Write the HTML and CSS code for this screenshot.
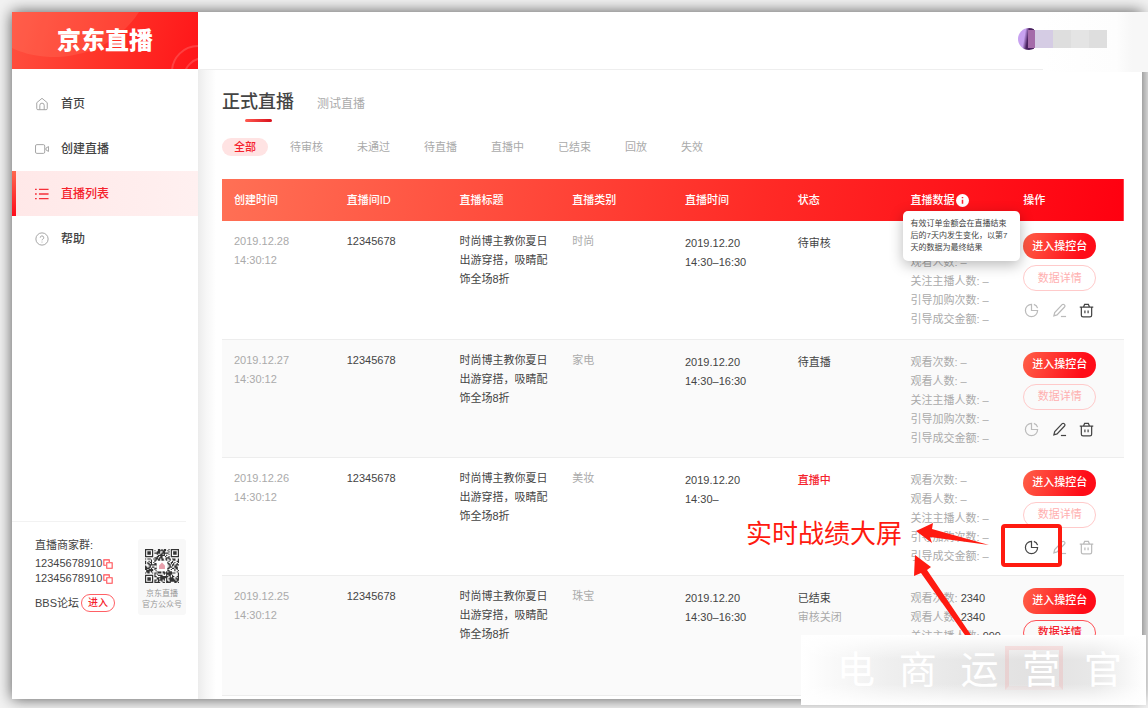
FILE: index.html
```html
<!DOCTYPE html>
<html lang="zh-CN">
<head>
<meta charset="utf-8">
<title>京东直播</title>
<link rel="stylesheet" href="styles.css">
</head>
<body>
<svg class="symbols" aria-hidden="true">
  <symbol id="pie" viewBox="0 0 16 16"><path d="M8 1.500A6.500 6.500 0 1 0 14.500 8H8z"/><path d="M10.500 1.500A6 6 0 0 1 14.500 5.500"/></symbol>
  <symbol id="edit" viewBox="0 0 16 16"><path d="M2 13.800l.9-3.600 8-8.400a1.400 1.400 0 0 1 2 0l.5.500a1.400 1.400 0 0 1 0 2L5.400 12.700z"/><path d="M9.500 14.400h5.500"/></symbol>
  <symbol id="trash" viewBox="0 0 16 16"><path d="M.8 4.400h14.400M4.800 4.200L6 1.500h4l1.200 2.700M2.500 4.600v8.400a1.800 1.800 0 0 0 1.800 1.800h7.400a1.800 1.800 0 0 0 1.800-1.800V4.600M6.300 8v3M9.700 8v3"/></symbol>
  <symbol id="copy" viewBox="0 0 12 12"><path d="M3.500 7.500H1V1h6.500v2.500M4.500 4.500H11V11H4.500z"/></symbol>
</svg>
<div class="window">
  <aside class="sidebar">
    <div class="logo">
      <svg class="logo-art" viewBox="0 0 186 57" preserveAspectRatio="none" aria-hidden="true">
        <path class="swoosh" d="M0 0H127C105 34 68 46 38 45C20 44 8 40 0 36Z"/>
        <circle class="ring" cx="186" cy="60" r="26"/><circle class="ring" cx="192" cy="66" r="20"/>
      </svg>
      <span class="logo-text">京东直播</span>
    </div>
    <nav class="nav">
      <a class="nav-item" href="#"><svg class="nav-icon" viewBox="0 0 16 16"><path d="M2 6.500L8 1.500l6 5v6.700a1.300 1.300 0 0 1-1.300 1.300H3.300A1.300 1.300 0 0 1 2 13.200zM5.500 14.300V9.500a2.500 2.500 0 0 1 5 0v4.800"/></svg>首页</a>
      <a class="nav-item" href="#"><svg class="nav-icon" viewBox="0 0 16 16"><rect x="0.600" y="3" width="10.500" height="10" rx="1.500"/><path d="M12.500 7l2.900-1.800v5.600L12.500 9z"/></svg>创建直播</a>
      <a class="nav-item active" href="#"><svg class="nav-icon" viewBox="0 0 16 16"><path d="M4.500 2.800h11M4.500 8h11M4.500 13.200h11M0 2.800h2M0 8h2M0 13.200h2"/></svg>直播列表</a>
      <a class="nav-item" href="#"><svg class="nav-icon" viewBox="0 0 16 16"><circle cx="8" cy="8" r="7"/><path d="M6 6.500a2 2 0 1 1 2.800 1.800c-.6.3-.8.600-.8 1.200M8 11v1"/></svg>帮助</a>
    </nav>
    <div class="side-foot">
      <div class="contact">
        <div class="contact-title">直播商家群:</div>
        <div class="contact-row">12345678910<button class="copy" aria-label="复制"><svg><use href="#copy"/></svg></button></div>
        <div class="contact-row">12345678910<button class="copy" aria-label="复制"><svg><use href="#copy"/></svg></button></div>
        <div class="contact-row forum">BBS论坛<button class="enter">进入</button></div>
      </div>
      <div class="qr-card">
        <svg class="qr" viewBox="0 0 29 29" aria-label="二维码"><path id="qr-path"/><rect class="qr-hole" x="10" y="10" width="9" height="9"/><path class="qr-logo" d="M12 17v-3l2.500-2.500L17 14v3z"/></svg>
        <span>京东直播<br>官方公众号</span>
      </div>
    </div>
  </aside>
  <div class="body">
    <header class="topbar">
      <div class="user"><span class="avatar"></span><span class="mosaic"><i></i><i></i><i></i><i></i><i></i></span></div>
    </header>
    <main class="main">
      <div class="titles"><h1>正式直播</h1><a class="subtitle" href="#">测试直播</a></div>
      <div class="tabs">
        <button class="tab selected">全部</button><button class="tab">待审核</button><button class="tab">未通过</button><button class="tab">待直播</button><button class="tab">直播中</button><button class="tab">已结束</button><button class="tab">回放</button><button class="tab">失效</button>
      </div>
      <table class="list">
        <thead><tr>
          <th>创建时间</th><th>直播间ID</th><th>直播标题</th><th>直播类别</th><th>直播时间</th><th>状态</th>
          <th class="tip-cell"><span class="tip-label">直播数据<svg class="info" viewBox="0 0 12 12"><circle cx="6" cy="6" r="6"/><path d="M6 5.200V9M6 2.800v1.200"/></svg></span><div class="tooltip">有效订单金额会在直播结束<br>后的7天内发生变化，以第7<br>天的数据为最终结果</div></th>
          <th>操作</th>
        </tr></thead>
        <tbody>
          <tr>
            <td class="muted">2019.12.28<br>14:30:12</td><td>12345678</td><td>时尚博主教你夏日出游穿搭，吸睛配饰全场8折</td><td class="muted">时尚</td>
            <td class="low">2019.12.20<br>14:30–16:30</td><td class="low">待审核</td>
            <td class="low stats"><br>观看人数: –<br>关注主播人数: –<br>引导加购次数: –<br>引导成交金额: –</td>
            <td class="ops"><button class="primary">进入操控台</button><button class="outline" disabled>数据详情</button><div class="icons"><button disabled aria-label="数据"><svg><use href="#pie"/></svg></button><button disabled aria-label="编辑"><svg><use href="#edit"/></svg></button><button aria-label="删除"><svg><use href="#trash"/></svg></button></div></td>
          </tr>
          <tr>
            <td class="muted">2019.12.27<br>14:30:12</td><td>12345678</td><td>时尚博主教你夏日出游穿搭，吸睛配饰全场8折</td><td class="muted">家电</td>
            <td class="low">2019.12.20<br>14:30–16:30</td><td class="low">待直播</td>
            <td class="low stats">观看次数: –<br>观看人数: –<br>关注主播人数: –<br>引导加购次数: –<br>引导成交金额: –</td>
            <td class="ops"><button class="primary">进入操控台</button><button class="outline" disabled>数据详情</button><div class="icons"><button disabled aria-label="数据"><svg><use href="#pie"/></svg></button><button aria-label="编辑"><svg><use href="#edit"/></svg></button><button aria-label="删除"><svg><use href="#trash"/></svg></button></div></td>
          </tr>
          <tr>
            <td class="muted">2019.12.26<br>14:30:12</td><td>12345678</td><td>时尚博主教你夏日出游穿搭，吸睛配饰全场8折</td><td class="muted">美妆</td>
            <td class="low">2019.12.20<br>14:30–</td><td class="low live">直播中</td>
            <td class="low stats">观看次数: –<br>观看人数: –<br>关注主播人数: –<br>引导加购次数: –<br>引导成交金额: –</td>
            <td class="ops"><button class="primary">进入操控台</button><button class="outline" disabled>数据详情</button><div class="icons"><button aria-label="数据"><svg><use href="#pie"/></svg></button><button disabled aria-label="编辑"><svg><use href="#edit"/></svg></button><button disabled aria-label="删除"><svg><use href="#trash"/></svg></button></div></td>
          </tr>
          <tr>
            <td class="muted">2019.12.25<br>14:30:12</td><td>12345678</td><td>时尚博主教你夏日出游穿搭，吸睛配饰全场8折</td><td class="muted">珠宝</td>
            <td class="low">2019.12.20<br>14:30–16:30</td><td class="low">已结束<br><span class="muted">审核关闭</span></td>
            <td class="low stats">观看次数: <b>2340</b><br>观看人数: <b>2340</b><br>关注主播人数: <b>999</b></td>
            <td class="ops"><button class="primary">进入操控台</button><button class="outline">数据详情</button></td>
          </tr>
        </tbody>
      </table>
    </main>
  </div>
  <div class="note">实时战绩大屏</div>
  <svg class="arrows" viewBox="0 0 80 120" aria-hidden="true"><path d="M4 11L21 3L20 9L77 25L18 17L20 23ZM3 35L19 47L15 50L61 118L55 118L9 53L2 56Z"/></svg>
  <div class="mark"></div>
  <div class="patch"></div>
  <div class="watermark"><i class="faint-mark"></i><span>电</span><span>商</span><span>运</span><span>营</span><span>官</span></div>
</div>
<script src="qr.js"></script>
</body>
</html>
```
FILE: styles.css
```css
* { box-sizing: border-box; }
body {
  margin: 0;
  padding: 12px 6px 9px 12px;
  background: #f2f2f2;
  color: #444;
  font: 11px/19px "Liberation Sans", "Noto Sans CJK SC", sans-serif;
}
button { margin: 0; padding: 0; border: 0; background: none; font: inherit; color: inherit; }
a { color: inherit; text-decoration: none; }
svg { fill: none; stroke: currentColor; display: block; }
.symbols { display: none; }

.window {
  position: relative;
  display: flex;
  min-height: calc(100vh - 21px);
  background: #fff;
  box-shadow: 0 0 14px rgba(0, 0, 0, .65);
}

/* sidebar */
.sidebar { flex: none; width: 186px; display: flex; flex-direction: column; }
.logo {
  position: relative;
  height: 57px;
  display: flex;
  align-items: center;
  justify-content: center;
  background: linear-gradient(105deg, #ff5140, #ff3328 50%, #ff1519);
}
.logo-art { position: absolute; inset: 0; width: 100%; height: 100%; stroke: none; }
.swoosh { fill: rgba(255, 150, 120, .2); }
.ring { stroke: rgba(255, 150, 150, .3); stroke-width: 2; }
.logo-text { position: relative; color: #fff; font-size: 24px; line-height: 32px; font-weight: 900; }
.nav { padding-top: 12px; }
.nav-item {
  display: flex;
  align-items: center;
  gap: 12px;
  height: 45px;
  padding: 1px 0 0 19px;
  border-left: 4px solid transparent;
  font-size: 12px;
  font-weight: 500;
}
.nav-icon { width: 14px; height: 14px; color: #999; }
.nav-item.active {
  color: #f5222d;
  background: linear-gradient(90deg, #ffe8e8, #fff0f0);
  border-image: linear-gradient(#ff6a50, #ff0a1a) 1;
}
.nav-item.active .nav-icon { color: #f5303a; stroke-width: 1.5; }
.side-foot {
  display: flex;
  justify-content: space-between;
  align-items: flex-start;
  margin: auto 12px 0 0;
  padding: 17px 0 84px 23px;
  border-top: 1px solid #f2f2f2;
}
.contact-title { line-height: 12px; margin-bottom: 5px; }
.contact-row { display: flex; align-items: center; gap: 1px; line-height: 15px; }
.forum { margin-top: 8px; line-height: 18px; gap: 2px; }
.copy { color: #ff4a50; }
.copy svg { width: 10px; height: 10px; stroke-width: 1.300; }
.enter {
  width: 34px;
  height: 18px;
  line-height: 16px;
  border: 1px solid #ff6065;
  border-radius: 9px;
  color: #f5222d;
  font-size: 10px;
  font-weight: 500;
}
.qr-card {
  display: flex;
  flex-direction: column;
  align-items: center;
  gap: 5px;
  width: 48px;
  padding: 10px 0 5px;
  border-radius: 3px;
  background: #f8f8f8;
  color: #999;
  font-size: 8px;
  line-height: 11px;
  text-align: center;
}
.qr { width: 34px; height: 34px; stroke: none; fill: #333; }
.qr-hole { fill: #fff; }
.qr-logo { fill: #e8a0ac; }

/* content */
.body { flex: 1; min-width: 0; display: flex; flex-direction: column; }
.topbar {
  display: flex;
  align-items: center;
  justify-content: flex-end;
  height: 58px;
  padding: 0 35px 3px 0;
  border-bottom: 1px solid #eee;
}
.user { display: flex; align-items: center; position: relative; z-index: 1; }
.avatar {
  width: 22px;
  height: 22px;
  margin-right: -12px;
  border-radius: 50%;
  background: linear-gradient(100deg, #c8a2f0 30%, #4a2060 45%);
  clip-path: inset(0 6px 0 0);
}
.mosaic { position: relative; display: flex; height: 18px; }
.mosaic i { width: 18px; background: #dedede; }
.mosaic i:nth-child(1) { width: 7px; background: #a46ba9; }
.mosaic i:nth-child(2) { background: #d5cce4; }
.mosaic i:nth-child(4) { background: #e4e4e4; }
.main {
  flex: 1;
  padding: 18px 18px 2px 24px;
  background: linear-gradient(90deg, #ececec, #f6f6f6 8px, #fff 18px);
}
.titles { display: flex; align-items: center; gap: 23px; height: 28px; }
h1 { position: relative; margin: 0; font-size: 18px; line-height: 28px; font-weight: 500; }
h1::after {
  content: "";
  position: absolute;
  left: 50%;
  bottom: -6px;
  width: 27px;
  height: 3px;
  margin-left: -13px;
  border-radius: 2px;
  background: linear-gradient(90deg, #ff5a50, #d8101c);
}
.subtitle { color: #aaa; font-size: 12px; padding-top: 4px; }
.tabs { display: flex; gap: 10px; margin: 22px 0 23px; }
.tab { height: 18px; padding: 0 12px; line-height: 18px; border-radius: 9px; color: #aaa; }
.tab.selected { color: #f5222d; background: #ffe3e3; font-weight: 500; }

.list { width: 100%; table-layout: fixed; border-collapse: collapse; }
thead tr { background: linear-gradient(100deg, #ff7055, #ff2a26 60%, #ff0010); }
th { height: 42px; padding: 0 0 0 12px; color: #fff; font-weight: 500; text-align: left; }
td { padding: 11px 8px 0 12px; vertical-align: top; }
tbody tr { height: 118px; border-bottom: 1px solid #ededed; }
tbody tr:nth-child(even) { background: #fafafa; }
tbody tr:last-child { height: 120px; }
.muted { color: #aaa; }
td.low { padding-top: 13px; }
.stats { color: #aaa; white-space: nowrap; }
.stats b { color: #444; font-weight: 400; }
.live { color: #f5222d; font-weight: 500; }
.tip-cell { position: relative; }
.tip-label { display: flex; align-items: center; gap: 1px; }
.info { width: 13px; height: 13px; fill: #fff; stroke: none; }
.info path { stroke: #ff2030; stroke-width: 1.4; }
.tooltip {
  position: absolute;
  top: 32px;
  left: 4px;
  width: 117px;
  padding: 7px 8px;
  border-radius: 5px;
  background: #fff;
  box-shadow: 0 4px 14px rgba(0, 0, 0, .28);
  color: #444;
  font-size: 8px;
  line-height: 12px;
  font-weight: 400;
  white-space: nowrap;
}
td.ops { padding: 12px 0 0 12px; }
.primary, .outline { display: block; width: 73px; height: 26px; border-radius: 13px; font-weight: 500; }
.primary { color: #fff; background: linear-gradient(110deg, #ff6048, #ff0c18 80%); }
.outline { margin-top: 6px; border: 1px solid #ff5055; color: #f5222d; }
.outline:disabled { border-color: #ffcaca; color: #ffb0b0; font-weight: 400; }
.icons { display: flex; justify-content: space-between; width: 73px; padding: 12px 2px 0 1px; }
.icons svg { width: 15px; height: 15px; stroke-width: 1.3; }
.icons button:disabled { color: #bbb; }

/* annotations floating over the page */
.note { position: absolute; left: 734px; top: 504px; color: #ff1a10; font-size: 26px; line-height: 36px; white-space: nowrap; }
.arrows { position: absolute; left: 900px; top: 508px; width: 80px; height: 120px; fill: #ff1a10; stroke: none; }
.mark { position: absolute; left: 989px; top: 512px; width: 61px; height: 43px; border: 4px solid #ff1a10; border-radius: 4px; }
.patch {
  position: absolute;
  right: -6px;
  top: 0;
  width: 105px;
  height: 60px;
  background: linear-gradient(90deg, #fff, #fdfdfd 70%, #f7f7f7 85%);
}
.watermark {
  position: absolute;
  right: -4px;
  bottom: -6px;
  display: flex;
  justify-content: space-around;
  align-items: center;
  width: 345px;
  height: 70px;
  padding: 0 12px 0 24px;
  background:
    linear-gradient(#fff, transparent 35%, transparent 70%, #fff),
    linear-gradient(90deg, #fff, #efefef 25%, #e6e6e6 50%, #e2e1e1 68%, #e8e8e8 85%, #fff);
  color: #fff;
  font-size: 38px;
  line-height: 60px;
  font-weight: 400;
}
.watermark span { position: relative; }
.faint-mark {
  position: absolute;
  left: 204px;
  top: 11px;
  width: 58px;
  height: 44px;
  border: 4px solid rgba(255, 120, 120, .16);
  border-bottom-color: rgba(255, 120, 120, .05);
}
```
FILE: qr.js
```js
const size = 29;
let seed = 7;
let d = "";
const inFinder = (x, y) => (x < 8 && y < 8) || (x > 20 && y < 8) || (x < 8 && y > 20);
for (let y = 0; y < size; y++) {
  for (let x = 0; x < size; x++) {
    seed = (seed * 16807) % 2147483647;
    if (!inFinder(x, y) && seed % 100 < 52) d += `M${x} ${y}h1v1h-1z`;
  }
}
for (const [x, y] of [[0, 0], [22, 0], [0, 22]]) {
  d += `M${x} ${y}h7v7h-7zM${x + 1} ${y + 1}v5h5v-5zM${x + 2} ${y + 2}h3v3h-3z`;
}
document.getElementById("qr-path").setAttribute("d", d);
```
